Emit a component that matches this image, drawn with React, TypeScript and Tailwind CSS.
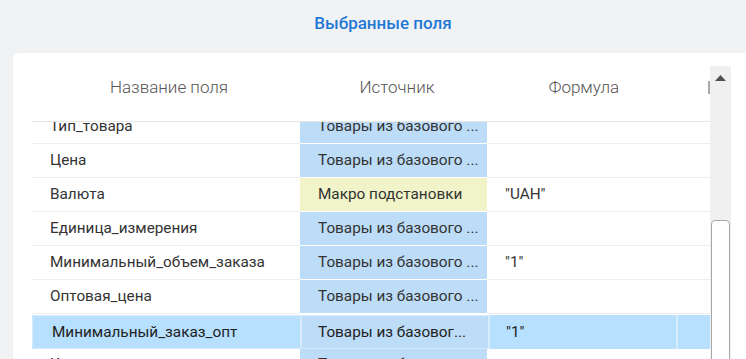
import React from "react";

type Row = { name: string; source: string; kind: "blue" | "yellow" | "none"; formula?: string };

const rows: Row[] = [
  { name: "Тип_товара", source: "Товары из базового ...", kind: "blue" },
  { name: "Цена", source: "Товары из базового ...", kind: "blue" },
  { name: "Валюта", source: "Макро подстановки", kind: "yellow", formula: "\"UAH\"" },
  { name: "Единица_измерения", source: "Товары из базового ...", kind: "blue" },
  { name: "Минимальный_объем_заказа", source: "Товары из базового ...", kind: "blue", formula: "\"1\"" },
  { name: "Оптовая_цена", source: "Товары из базового ...", kind: "blue" },
  { name: "", source: "", kind: "none" },
  { name: "Код_товара", source: "Товары из базового ...", kind: "blue" },
];

export default function App() {
  return (
    <div
      className="relative w-[746px] h-[359px] overflow-hidden bg-[#f1f2f4] flex flex-col"
      style={{ fontFamily: "Roboto, 'Noto Sans', sans-serif" }}
    >
      <div className="h-[53px] flex items-center justify-center shrink-0 pl-[20px]">
        <span className="text-[17px] font-medium text-[#1f78d4] pb-[6px]">Выбранные поля</span>
      </div>
      <div className="flex-1 ml-[13px] bg-white rounded-tl-[6px] flex">
        <div className="w-[19px] shrink-0" />
        <div className="w-[678px] shrink-0 flex flex-col">
          <div className="h-[69px] shrink-0 flex items-center border-b border-[#e6e6e6] text-[17px] font-light text-[#555] pt-[1px]">
            <div className="w-[274px] text-center">Название поля</div>
            <div className="w-[182px] text-center">Источник</div>
            <div className="w-[192px] text-center">Формула</div>
            <div className="flex-1 flex justify-end">
              <div className="w-[2px] h-[13px] bg-[#aaa]" />
            </div>
          </div>
          <div className="flex-1 overflow-hidden">
            <div className="-mt-[12px]">
              {rows.map((r, i) => (
                <div key={i} className="h-[34px] flex text-[15.3px] text-[#333]">
                  <div className="w-[268px] border-b border-[#eeeeee] flex items-center pl-[18px]">{r.name}</div>
                  <div
                    className={
                      "w-[187px] border-b flex items-center pl-[18px] " +
                      (r.kind === "blue"
                        ? "bg-[#bcdcf8] border-white"
                        : r.kind === "yellow"
                        ? "bg-[#f0f4c8] border-white"
                        : "border-[#eeeeee]")
                    }
                  >
                    {r.source}
                  </div>
                  <div className="flex-1 border-b border-[#eeeeee] flex items-center pl-[18px]">{r.formula}</div>
                </div>
              ))}
            </div>
          </div>
        </div>
        <div className="w-[21px] shrink-0 mt-[13px] bg-[#f0f0f0] flex flex-col items-center">
          <svg width="11" height="6" viewBox="0 0 11 6" className="mt-[9px]">
            <polygon points="0,6 5.5,0 11,6" fill="#505050" />
          </svg>
          <div className="mt-[139px] w-[19px] flex-1 bg-white border border-[#a8a8a8] rounded-t-[4px]" />
        </div>
      </div>

      {/* dragged row */}
      <div className="absolute left-[32px] top-[315px] w-[678px] h-[34px] flex bg-[#b6e0fd] text-[15.3px] text-[#222]">
        <div className="w-[269px] border border-[#d6ebfb] rounded-[3px] flex items-center pl-[19px]">Минимальный_заказ_опт</div>
        <div className="w-[188px] bg-[#bcdcf8] border border-[#d6ebfb] flex items-center pl-[16px]">Товары из базовог...</div>
        <div className="w-[187px] border-l border-[#d6ebfb] flex items-center pl-[16px]">"1"</div>
        <div className="flex-1 border-l-2 border-[#d6ebfb]" />
      </div>
    </div>
  );
}
